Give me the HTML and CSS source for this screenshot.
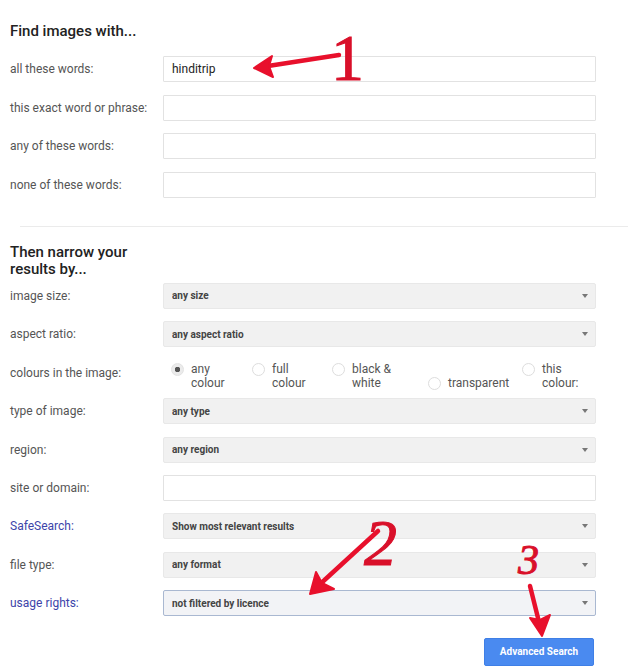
FILE: index.html
```html
<!DOCTYPE html>
<html lang="en">
<head>
    <meta charset="UTF-8">
    <meta name="viewport" content="width=device-width, initial-scale=1.0">
    <title>Advanced Image Search</title>
    <link rel="stylesheet" href="styles.css">
</head>
<body>
    <div class="page">
        <form class="search-form">
            <section class="group first">
                <h2 class="group-title">Find images with...</h2>
                <div class="row">
                    <label for="all">all these words:</label>
                    <input class="field" type="text" id="all" value="hinditrip">
                </div>
                <div class="row">
                    <label for="exact">this exact word or phrase:</label>
                    <input class="field" type="text" id="exact">
                </div>
                <div class="row">
                    <label for="any">any of these words:</label>
                    <input class="field" type="text" id="any">
                </div>
                <div class="row">
                    <label for="none">none of these words:</label>
                    <input class="field" type="text" id="none">
                </div>
            </section>

            <hr class="divider">

            <section class="group second">
                <h2 class="group-title">Then narrow your<br>results by...</h2>
                <div class="row">
                    <label for="size">image size:</label>
                    <div class="select"><select id="size"><option>any size</option></select></div>
                </div>
                <div class="row">
                    <label for="ratio">aspect ratio:</label>
                    <div class="select"><select id="ratio"><option>any aspect ratio</option></select></div>
                </div>
                <div class="row">
                    <label>colours in the image:</label>
                    <div class="colours">
                        <label class="option w1"><input type="radio" name="colour" checked><span>any<br>colour</span></label>
                        <label class="option w2"><input type="radio" name="colour"><span>full<br>colour</span></label>
                        <label class="option w3"><input type="radio" name="colour"><span>black &amp;<br>white</span></label>
                        <label class="option w4 low"><input type="radio" name="colour"><span>transparent</span></label>
                        <label class="option"><input type="radio" name="colour"><span>this<br>colour:</span></label>
                    </div>
                </div>
                <div class="row">
                    <label for="type">type of image:</label>
                    <div class="select"><select id="type"><option>any type</option></select></div>
                </div>
                <div class="row">
                    <label for="region">region:</label>
                    <div class="select"><select id="region"><option>any region</option></select></div>
                </div>
                <div class="row">
                    <label for="site">site or domain:</label>
                    <input class="field" type="text" id="site">
                </div>
                <div class="row">
                    <label class="link" for="safe">SafeSearch:</label>
                    <div class="select"><select id="safe"><option>Show most relevant results</option></select></div>
                </div>
                <div class="row">
                    <label for="filetype">file type:</label>
                    <div class="select"><select id="filetype"><option>any format</option></select></div>
                </div>
                <div class="row">
                    <label class="link" for="rights">usage rights:</label>
                    <div class="select focused"><select id="rights"><option>not filtered by licence</option></select></div>
                </div>
            </section>

            <div class="actions">
                <button type="submit">Advanced Search</button>
            </div>
        </form>

        <!-- anotacoes a mao por cima da pagina -->
        <svg class="marks" width="628" height="666" viewBox="0 0 628 666">
            <g fill="#e8102c" stroke="#e8102c" stroke-linecap="round" stroke-linejoin="round">
                <path d="M339 55 L268 66" stroke-width="4.5" fill="none"/>
                <path d="M254 68 L272 56 L269 66 L273 77 Z" stroke-width="2"/>

                <path d="M378 531 L318 586" stroke-width="4.5" fill="none"/>
                <path d="M310 594 L316 572 L322 583 L334 589 Z" stroke-width="2"/>

                <path d="M530 586 L539 622" stroke-width="4.5" fill="none"/>
                <path d="M542 636 L530 618 L540 620 L550 615 Z" stroke-width="2"/>
            </g>
            <g class="numbers" fill="#d9102a" stroke="#d9102a" stroke-width="1">
                <text class="upright" x="331" y="80" font-size="66">1</text>
                <text x="364" y="565" font-size="66">2</text>
                <text x="518" y="574" font-size="42">3</text>
            </g>
        </svg>
    </div>
</body>
</html>
```

FILE: styles.css
```css
body {
    margin: 0;
    background: #fff;
    font-family: Roboto, "Liberation Sans", Arial, sans-serif;
    color: #555;
}

.page {
    position: relative;
    width: 628px;
    height: 666px;
    overflow: hidden;
}

.search-form {
    padding: 23px 32px 0 10px;
}

.group-title {
    margin: 0;
    font-size: 15px;
    line-height: 17px;
    font-weight: 500;
    color: #222;
}

.first .group-title {
    margin-bottom: 16px;
}

.second .group-title {
    margin-bottom: 4.5px;
}

.row {
    display: flex;
    align-items: center;
    height: 26px;
}

.first .row {
    margin-bottom: 12.67px;
}

.second .row {
    margin-bottom: 12.4px;
}

.group .row:last-child {
    margin-bottom: 0;
}

.row > label {
    width: 153px;
    flex: none;
    font-size: 12px;
    color: #555;
}

.row > label.link {
    color: #3d44a9;
}

.field {
    box-sizing: border-box;
    width: 433px;
    height: 26px;
    margin: 0;
    padding: 0 8px;
    border: 1px solid #e2e2e2;
    border-radius: 1px;
    font-family: inherit;
    font-size: 12px;
    color: #222;
    outline: none;
}

.select {
    position: relative;
    width: 433px;
    height: 26px;
}

.select select {
    box-sizing: border-box;
    width: 100%;
    height: 100%;
    margin: 0;
    padding: 0 8px;
    appearance: none;
    -webkit-appearance: none;
    background: #f1f1f1;
    border: 1px solid #e8e8e8;
    border-radius: 2px;
    font-family: inherit;
    font-size: 10px;
    font-weight: 700;
    color: #444;
    outline: none;
}

.select.focused select {
    background: #f2f3f6;
    border-color: #a9b8d1;
}

.select::after {
    content: "";
    position: absolute;
    right: 8px;
    top: 11px;
    border-left: 3px solid transparent;
    border-right: 3px solid transparent;
    border-top: 4px solid #777;
}

.colours {
    display: flex;
    align-self: flex-start;
    padding: 2px 0 0 8px;
    font-size: 12px;
    line-height: 14px;
    color: #555;
}

.option {
    display: flex;
    align-items: flex-start;
    gap: 7px;
}

.option.w1 { width: 81px; }
.option.w2 { width: 80px; }
.option.w3 { width: 96px; }
.option.w4 { width: 94px; }

.option.low {
    padding-top: 14px;
}

.option input {
    appearance: none;
    -webkit-appearance: none;
    flex: none;
    width: 13px;
    height: 13px;
    margin: 1px 0 0;
    border: 1px solid #ddd;
    border-radius: 50%;
    background: #fff;
}

.option input:checked {
    background: radial-gradient(circle, #555 0 2.5px, #ebebeb 3px);
    border-color: #e2e2e2;
}

.divider {
    margin: 28px -32px 17.5px 10px;
    border: none;
    border-top: 1px solid #ebebeb;
}

.actions {
    display: flex;
    justify-content: flex-end;
    padding-top: 21.8px;
}

.actions button {
    width: 110px;
    height: 28px;
    margin-right: 2px;
    background: #4a8af0;
    border: 1px solid #3f7fe6;
    border-radius: 2px;
    color: #fff;
    font-family: inherit;
    font-size: 10px;
    font-weight: 700;
    cursor: pointer;
}

.marks {
    position: absolute;
    left: 0;
    top: 0;
    pointer-events: none;
}

.numbers text {
    font-family: "Liberation Serif", serif;
    font-style: italic;
}

.numbers text.upright {
    font-style: normal;
}
```
